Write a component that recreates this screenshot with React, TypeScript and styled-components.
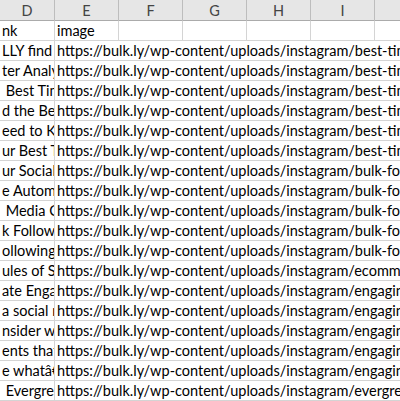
import React from "react";
import styled, { createGlobalStyle } from "styled-components";

const Global = createGlobalStyle`
  html, body { margin: 0; padding: 0; background: #ffffff; }
  body { overflow: hidden; }
`;

const Sheet = styled.div`
  width: 400px;
  height: 401px;
  overflow: hidden;
  background: #ffffff;
  font-family: Lato, "Open Sans", sans-serif;
  font-size: 14.5px;
  color: #000;
`;

const COLS = "55px 64px 64px 64px 64px 64px 1fr";

const HeaderRow = styled.div`
  display: grid;
  grid-template-columns: ${COLS};
  height: 20px;
  background: #e6e6e6;
  border-bottom: 1px solid #ababab;
`;

const HeaderCell = styled.div`
  border-right: 1px solid #bdbdbd;
  display: flex;
  align-items: center;
  justify-content: center;
  color: #444444;
  font-size: 14.5px;
  line-height: 20px;
  padding-top: 1px;
  box-sizing: border-box;
  &:last-child { border-right: none; }
`;

const Row = styled.div`
  display: grid;
  grid-template-columns: ${COLS};
  height: 20px;
`;

const Cell = styled.div<{ $span?: boolean; $last?: boolean }>`
  ${(p) => (p.$span ? "grid-column: 2 / -1;" : "")}
  height: 20px;
  box-sizing: border-box;
  border-right: ${(p) => (p.$span || p.$last ? "none" : "1px solid #d4d4d4")};
  border-bottom: 1px solid #d4d4d4;
  overflow: hidden;
  white-space: pre;
  line-height: 20px;
  padding-left: 2px;
`;

const headers = ["D", "E", "F", "G", "H", "I", ""];

const base = "https://bulk.ly/wp-content/uploads/instagram/";
const rows: [string, string][] = [
  ["LLY find the", "best-time-to-post-on-instagram.jpg"],
  ["ter Analytics", "best-time-to-post-on-instagram.jpg"],
  [" Best Time", "best-time-to-post-on-instagram.jpg"],
  ["d the Best", "best-time-to-post-on-instagram.jpg"],
  ["eed to Know", "best-time-to-post-on-instagram.jpg"],
  ["ur Best Time", "best-time-to-post-on-instagram.jpg"],
  ["ur Social Media", "bulk-follow-instagram.jpg"],
  ["e Automation", "bulk-follow-instagram.jpg"],
  [" Media Calendar", "bulk-follow-instagram.jpg"],
  ["k Follow and", "bulk-follow-instagram.jpg"],
  ["ollowing list", "bulk-follow-instagram.jpg"],
  ["ules of Social", "ecommerce-instagram.jpg"],
  ["ate Engagement", "engaging-instagram-posts.jpg"],
  ["a social network", "engaging-instagram-posts.jpg"],
  ["nsider what", "engaging-instagram-posts.jpg"],
  ["ents that work", "engaging-instagram-posts.jpg"],
  ["e whatâ€™s", "engaging-instagram-posts.jpg"],
  [" Evergreen", "evergreen-instagram.jpg"],
];

export default function App() {
  return (
    <>
      <Global />
      <Sheet>
        <HeaderRow>
          {headers.map((h, i) => (
            <HeaderCell key={i}>{h}</HeaderCell>
          ))}
        </HeaderRow>
        <Row>
          <Cell>nk</Cell>
          <Cell>image</Cell>
          <Cell />
          <Cell />
          <Cell />
          <Cell />
          <Cell $last />
        </Row>
        {rows.map(([d, e], i) => (
          <Row key={i}>
            <Cell>{d}</Cell>
            <Cell $span>{base + e}</Cell>
          </Row>
        ))}
      </Sheet>
    </>
  );
}
